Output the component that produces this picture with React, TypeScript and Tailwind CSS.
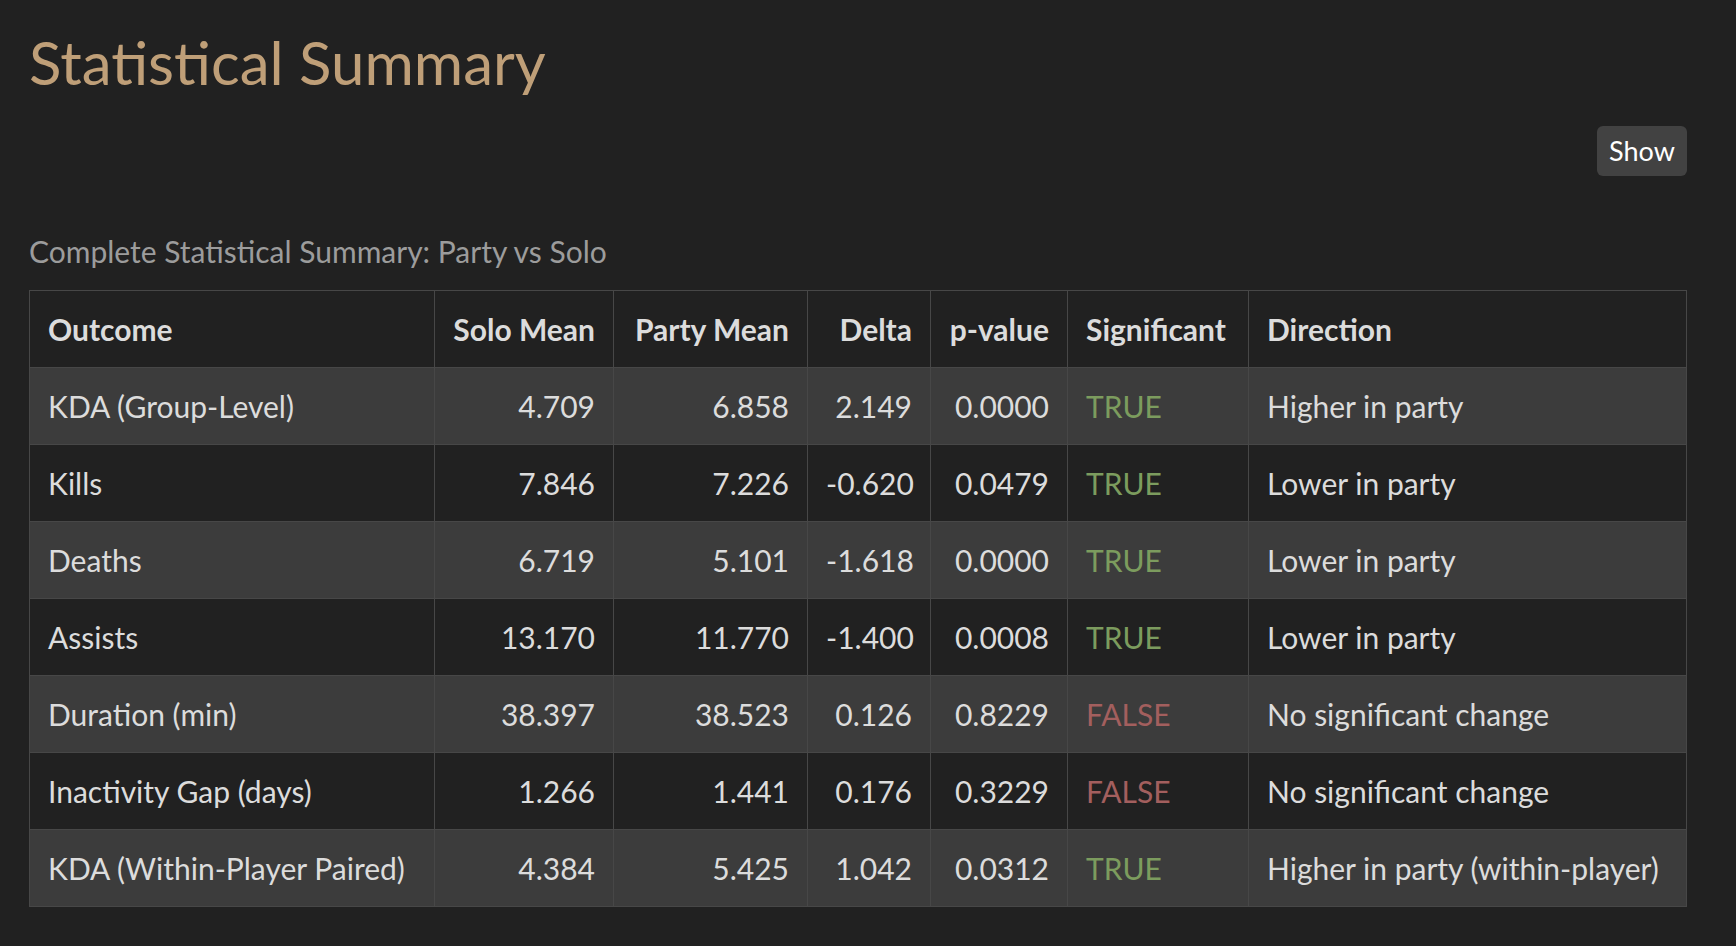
import React from "react";

type Row = {
  outcome: string;
  solo: string;
  party: string;
  delta: string;
  p: string;
  sig: boolean;
  dir: string;
};

const rows: Row[] = [
  { outcome: "KDA (Group-Level)", solo: "4.709", party: "6.858", delta: "2.149", p: "0.0000", sig: true, dir: "Higher in party" },
  { outcome: "Kills", solo: "7.846", party: "7.226", delta: "-0.620", p: "0.0479", sig: true, dir: "Lower in party" },
  { outcome: "Deaths", solo: "6.719", party: "5.101", delta: "-1.618", p: "0.0000", sig: true, dir: "Lower in party" },
  { outcome: "Assists", solo: "13.170", party: "11.770", delta: "-1.400", p: "0.0008", sig: true, dir: "Lower in party" },
  { outcome: "Duration (min)", solo: "38.397", party: "38.523", delta: "0.126", p: "0.8229", sig: false, dir: "No significant change" },
  { outcome: "Inactivity Gap (days)", solo: "1.266", party: "1.441", delta: "0.176", p: "0.3229", sig: false, dir: "No significant change" },
  { outcome: "KDA (Within-Player Paired)", solo: "4.384", party: "5.425", delta: "1.042", p: "0.0312", sig: true, dir: "Higher in party (within-player)" },
];

const cell = "border border-[#474747] px-[18px] h-[77px]";

export default function App() {
  return (
    <div
      className="min-h-screen bg-[#212121] text-[#dcdcdc] pl-[29px] pr-[49px] pt-[22px]"
      style={{ fontFamily: "Lato, 'Open Sans', sans-serif" }}
    >
      <h1 className="text-[60px] leading-[80px] text-[#bf9f78]">Statistical Summary</h1>

      <div className="flex justify-end mt-[24px]">
        <button className="h-[50px] w-[90px] rounded-md bg-[#424242] text-[27px] text-white">Show</button>
      </div>

      <p className="mt-[56px] text-[30px] leading-[38px] text-[#9c9c9c]">
        Complete Statistical Summary: Party vs Solo
      </p>

      <table className="mt-[20px] w-full table-fixed border-collapse text-[30px]">
        <colgroup>
          <col className="w-[405px]" />
          <col className="w-[179px]" />
          <col className="w-[194px]" />
          <col className="w-[123px]" />
          <col className="w-[137px]" />
          <col className="w-[181px]" />
          <col />
        </colgroup>
        <thead>
          <tr className="font-bold bg-[#212121]">
            <th className={`${cell} text-left`}>Outcome</th>
            <th className={`${cell} text-right`}>Solo Mean</th>
            <th className={`${cell} text-right`}>Party Mean</th>
            <th className={`${cell} text-right`}>Delta</th>
            <th className={`${cell} text-right`}>p-value</th>
            <th className={`${cell} text-left`}>Significant</th>
            <th className={`${cell} text-left`}>Direction</th>
          </tr>
        </thead>
        <tbody>
          {rows.map((r, i) => (
            <tr key={r.outcome} className={i % 2 === 0 ? "bg-[#3c3c3c]" : "bg-[#212121]"}>
              <td className={`${cell} whitespace-nowrap`}>{r.outcome}</td>
              <td className={`${cell} text-right`}>{r.solo}</td>
              <td className={`${cell} text-right`}>{r.party}</td>
              <td className={`${cell} text-right`}>{r.delta}</td>
              <td className={`${cell} text-right`}>{r.p}</td>
              <td className={`${cell} ${r.sig ? "text-[#7c9c5e]" : "text-[#a35f5e]"}`}>
                {r.sig ? "TRUE" : "FALSE"}
              </td>
              <td className={`${cell} whitespace-nowrap`}>{r.dir}</td>
            </tr>
          ))}
        </tbody>
      </table>
    </div>
  );
}
